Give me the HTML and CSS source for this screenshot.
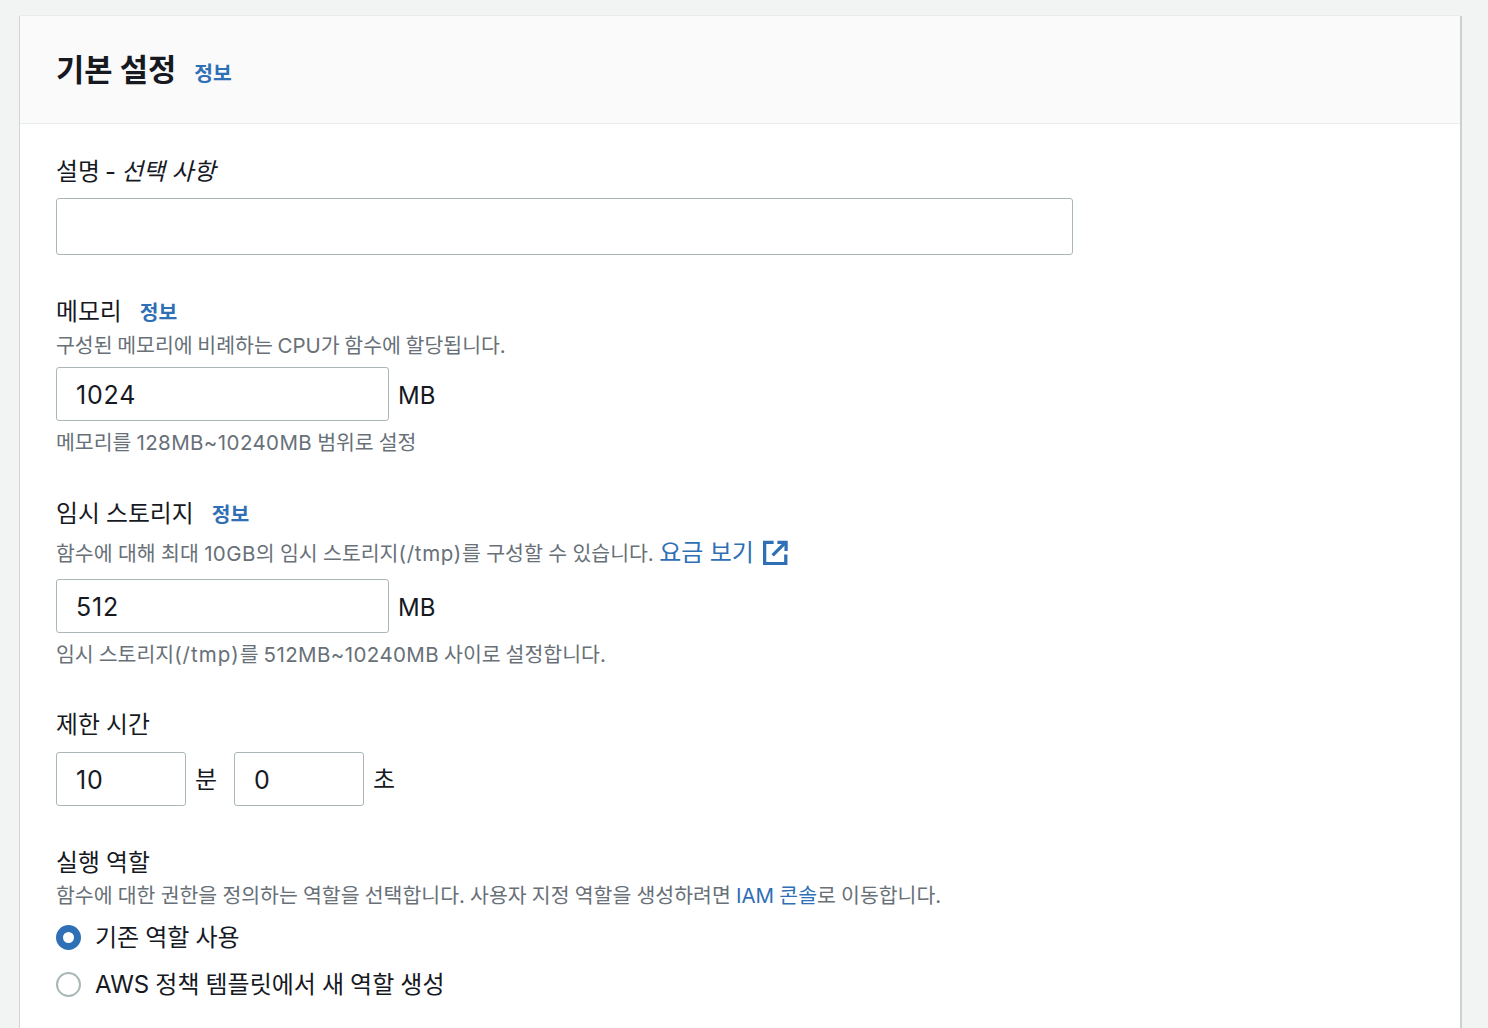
FILE: index.html
```html
<!DOCTYPE html>
<html lang="ko">
<head>
<meta charset="utf-8">
<title>기본 설정</title>
<link rel="stylesheet" href="styles.css">
</head>
<body>
<main class="card">
  <header class="card-header">
    <h2 class="title">기본 설정</h2>
    <a class="info info-title" href="#">정보</a>
  </header>
  <div class="card-body">
    <section class="field field-desc">
      <div class="label label-opt">설명 - <i class="opt">선택 사항</i></div>
      <div class="input input-full"></div>
    </section>
    <section class="field field-mem">
      <div class="label">메모리<a class="info" href="#">정보</a></div>
      <div class="desc">구성된 메모리에 비례하는 CPU가 함수에 할당됩니다.</div>
      <div class="input-row"><div class="input input-mb">1024</div><span class="unit">MB</span></div>
      <div class="desc hint">메모리를 <span class="nums">128MB~10240MB</span> 범위로 설정</div>
    </section>
    <section class="field field-tmp">
      <div class="label">임시 스토리지<a class="info" href="#">정보</a></div>
      <div class="desc desc-link">함수에 대해 최대 <span class="nums">10GB</span>의 임시 스토리지<span class="path">(/tmp)</span>를 구성할 수 있습니다. <a class="link link-big" href="#">요금 보기</a>
        <svg class="ext" width="25" height="25" viewBox="0 0 26 26" fill="none" stroke="#2f6fb5" stroke-width="3.400"><path d="M11 2.500H1.700v22h22V15"/><path d="M15 2.500h9v9"/><path d="M23.500 2.500 10 16"/></svg>
      </div>
      <div class="input-row"><div class="input input-mb">512</div><span class="unit">MB</span></div>
      <div class="desc hint hint-tmp">임시 스토리지<span class="path">(/tmp)</span>를 <span class="nums">512MB~10240MB</span> 사이로 설정합니다.</div>
    </section>
    <section class="field field-time">
      <div class="label">제한 시간</div>
      <div class="input-row time-row">
        <div class="input input-time">10</div><span class="unit">분</span>
        <div class="input input-time">0</div><span class="unit">초</span>
      </div>
    </section>
    <section class="field field-role">
      <div class="label">실행 역할</div>
      <div class="desc">함수에 대한 권한을 정의하는 역할을 선택합니다. 사용자 지정 역할을 생성하려면 <a class="link" href="#">IAM 콘솔</a>로 이동합니다.</div>
      <div class="radio-row radio-first"><span class="radio radio-on"></span><span class="radio-label">기존 역할 사용</span></div>
      <div class="radio-row"><span class="radio"></span><span class="radio-label">AWS 정책 템플릿에서 새 역할 생성</span></div>
    </section>
  </div>
</main>
</body>
</html>
```
FILE: styles.css
```css
* { box-sizing: border-box; }
html, body { margin: 0; height: 1028px; overflow: hidden; }
body {
  background: #f2f3f3;
  padding: 16px 26px 0 20px;
  font-family: "Inter", "Noto Sans CJK KR", sans-serif;
  color: #16191f;
}
.card {
  width: 1440px;
  height: 1012px;
  background: #fff;
  box-shadow: 2px 0 0 rgba(0, 28, 36, 0.16), -1px 0 0 rgba(0, 28, 36, 0.14), 0 -1px 0 rgba(0, 28, 36, 0.03);
}
.card-header {
  height: 108px;
  background: #fafafa;
  border-bottom: 1px solid #eaeded;
  padding: 0 36px;
  display: flex;
  align-items: center;
}
.title { margin: 0 18px 0 0; font-size: 30.700px; line-height: 44px; font-weight: 700; }
.info { color: #2f6fb5; font-size: 20.400px; font-weight: 700; word-spacing: 0; text-decoration: none; margin-left: 18px; }
.info-title { margin-left: 0; position: relative; top: 2px; }
.card-body { padding: 0 36px; }
.field { display: flex; flex-direction: column; align-items: flex-start; }
.label { font-size: 23.800px; line-height: 34px; word-spacing: -0.400px; }
.label-opt { word-spacing: -1.500px; }
.opt { font-style: italic; word-spacing: 0; }
.desc { font-size: 20.500px; line-height: 30px; color: #687078; word-spacing: -1.100px; }
.hint { margin-top: 7px; word-spacing: -0.800px; }
.path { letter-spacing: 0.700px; }
.hint-tmp .path { letter-spacing: 1px; }
.nums { letter-spacing: 0.400px; }
.input {
  height: 54px;
  border: 1px solid #aab7b8;
  border-radius: 3px;
  background: #fff;
  font-size: 25px;
  letter-spacing: 0.800px;
  line-height: 52px;
  padding: 1px 0 0 19px;
}
.input-full { width: 1017px; height: 57px; margin-top: 9px; }
.input-mb { width: 333px; }
.input-time { width: 130px; }
.input-row { display: flex; align-items: center; }
.unit { font-size: 24px; margin: 2px 0 0 9px; }
.time-row .unit { margin: 0 17px 3px 9px; }
.field-desc { padding-top: 31px; }
.field-mem { margin-top: 40px; }
.field-mem .label { margin-bottom: 1px; }
.field-mem .input-row { margin-top: 6px; }
.field-tmp .input-row { margin-top: 7px; }
.field-tmp { margin-top: 39px; }
.desc-link { display: flex; align-items: center; white-space: pre; margin-top: 4px; height: 36px; word-spacing: -0.400px; }
.link { color: #2f6fb5; text-decoration: none; }
.link-big { font-size: 24px; margin-bottom: 2px; }
.ext { margin: 0 0 3px 9px; }
.field-time { margin-top: 38px; }
.time-row { margin-top: 10px; }
.field-role { margin-top: 40px; }
.field-role .label { margin-bottom: 1px; }
.field-role .desc { word-spacing: -0.600px; }
.radio-row { display: flex; align-items: center; height: 47px; }
.radio-first { margin-top: 3px; }
.radio {
  width: 25px;
  height: 25px;
  border: 2px solid #aab7b8;
  border-radius: 50%;
  margin-right: 14px;
}
.radio-on { border: 7px solid #2f6fb5; }
.radio-label { font-size: 24px; word-spacing: -0.700px; margin-bottom: 4px; }
```
